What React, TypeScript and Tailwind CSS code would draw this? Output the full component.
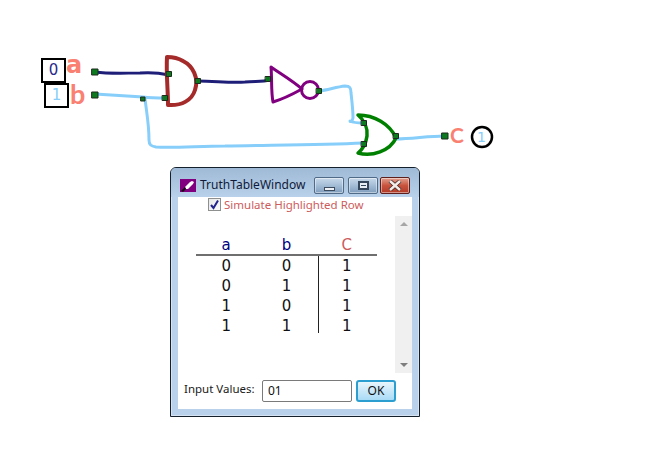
const rows = [
  ["0", "0", "1"],
  ["0", "1", "1"],
  ["1", "0", "1"],
  ["1", "1", "1"],
];

const terminals = [
  [95, 72, 6],
  [95, 95, 6],
  [143, 99, 4],
  [169, 74, 5],
  [165, 98, 5],
  [198, 81, 5],
  [268, 79, 5],
  [319, 91, 5],
  [364, 123, 5],
  [364, 144, 5],
  [396, 136, 5],
  [445, 136, 6],
];

function Circuit() {
  return (
    <svg className="absolute inset-0" width="664" height="459" fill="none" strokeLinecap="round" strokeLinejoin="round">
      <g stroke="#1e1e78" strokeWidth="3">
        <path d="M95 72C110 74 125 73 140 73C152 72 160 73 169 75" />
        <path d="M198 81C215 81 230 83 245 82C255 81 262 82 270 80" />
      </g>
      <g stroke="#87cefa" strokeWidth="3">
        <path d="M95 94C112 95 128 96 143 97C150 98 158 98 167 98" />
        <path d="M145 99C147 115 149 125 149 140C149 145 151 146 156 147C175 148 200 146 225 146C270 145 320 145 363 143" />
        <path d="M319 91C328 90 336 87 345 86C350 86 351 88 351 93C352 102 353 110 353 118C352 122 350 122 350 121C354 123 358 123 363 123" />
        <path d="M396 139C412 139 428 136 445 136" />
      </g>
      <path d="M167 57C166 72 168 90 168 105C182 106 192 100 195 90C199 78 193 66 183 61C178 58 172 57 167 57Z" stroke="#a52a2a" strokeWidth="4" />
      <g stroke="#800080" strokeWidth="3">
        <path d="M271 67C272 78 271 92 273 102C283 99 293 94 302 89C293 81 281 74 271 67Z" />
        <circle cx="310" cy="90" r="8.5" />
      </g>
      <g stroke="#008000" strokeWidth="3.5">
        <path d="M358 115C364 120 368 128 367 136C366 143 363 149 358 153C372 157 390 151 396 138C390 124 374 115 358 115Z" />
      </g>
      {terminals.map(([x, y, s], i) => (
        <rect key={i} x={x - s / 2} y={y - s / 2} width={s} height={s} fill="#0d7a1f" stroke="#1c2a1c" strokeWidth="1" />
      ))}
      <circle cx="482" cy="137" r="10" stroke="#000" strokeWidth="2.5" fill="#fff" />
    </svg>
  );
}

function TitleButton({ className, children }: { className: string; children: React.ReactNode }) {
  return (
    <div className={`w-[30px] h-[17px] flex items-center justify-center rounded-[2px] border shadow-[inset_0_0_0_1px_rgba(255,255,255,0.45)] ${className}`}>
      {children}
    </div>
  );
}

function TruthTableWindow() {
  return (
    <div className="absolute left-[170px] top-[167px] w-[250px] h-[250px] flex flex-col rounded-t-[6px] border border-[#14202c] bg-[#b9d1ea] shadow-[inset_0_0_0_1px_rgba(255,255,255,0.4)]">
      <div className="h-[29px] shrink-0 flex items-start pl-[9px] rounded-t-[5px] bg-gradient-to-b from-[#9fbad6] to-[#b9d1ea]">
        <svg className="mt-[11px]" width="16" height="13" viewBox="0 0 16 13">
          <rect width="16" height="13" fill="#800080" />
          <path d="M5 8L10 3L12 2L14 3L13 5L8 10L6 10Z" fill="#fff" />
          <path d="M1 12L5 8L6 10L3 13Z" fill="#111" />
        </svg>
        <span className="ml-[4px] mt-[9px] text-[12px] leading-[16px] text-[#101a3a] font-['Noto_Sans',sans-serif]">TruthTableWindow</span>
        <div className="ml-auto flex mt-[9px] mr-[9px]">
          <TitleButton className="mr-[4px] border-[#4f6b88] bg-gradient-to-b from-[#c8d9ea] via-[#a4bdd6] to-[#7f9dbd]">
            <div className="w-[11px] h-[4px] mt-[6px] bg-[#eef2f7] border border-[#3d4c5e]" />
          </TitleButton>
          <TitleButton className="mr-[2px] border-[#4f6b88] bg-gradient-to-b from-[#c8d9ea] via-[#a4bdd6] to-[#7f9dbd]">
            <div className="w-[11px] h-[9px] border-2 border-[#33465c] bg-[#e8eef5] flex items-center justify-center">
              <div className="w-[5px] h-[1px] bg-[#33465c]" />
            </div>
          </TitleButton>
          <TitleButton className="border-[#5e1f1c] bg-gradient-to-b from-[#e0a090] via-[#c9543e] to-[#b03a26]">
            <svg width="14" height="11" viewBox="0 0 14 11">
              <path d="M2 1L12 10M12 1L2 10" stroke="#3f2a2a" strokeWidth="4" />
              <path d="M2 1L12 10M12 1L2 10" stroke="#f3ece8" strokeWidth="2.4" />
            </svg>
          </TitleButton>
        </div>
      </div>
      <div className="mx-[7px] mb-[7px] flex-1 flex flex-col bg-white">
        <div className="h-[19px] shrink-0 flex items-start pt-[1px] pl-[30px]">
          <div className="w-[13px] h-[13px] flex items-center justify-center border border-[#8e8f8f] bg-gradient-to-br from-[#e8e8e8] to-[#fafafa]">
            <svg width="11" height="11" viewBox="0 0 11 11" fill="none">
              <path d="M2 6L4.5 9L9 1.5" stroke="#23238e" strokeWidth="2" />
            </svg>
          </div>
          <span className="ml-[3px] text-[11.5px] leading-[13px] text-[#cd5c5c] font-['Noto_Sans',sans-serif]">Simulate Highlighted Row</span>
        </div>
        <div className="flex-1 flex">
          <div className="flex-1 pl-[18px] pt-[20px]">
            <div className="w-[181px] font-['DejaVu_Sans',sans-serif] text-[15px] leading-[20px]">
              <div className="grid grid-cols-3 h-[20px] border-b-2 border-[#6f6f6f] text-center">
                <span className="text-[#000080] leading-[18px]">a</span>
                <span className="text-[#000080] leading-[18px]">b</span>
                <span className="text-[#cd5c5c] leading-[18px]">C</span>
              </div>
              <div className="relative">
                {rows.map((row, i) => (
                  <div key={i} className="grid grid-cols-3 h-[20px] text-center text-[#111111]">
                    {row.map((v, j) => (
                      <span key={j}>{v}</span>
                    ))}
                  </div>
                ))}
                <div className="absolute left-[122px] top-0 w-[1px] h-[77px] bg-[#222222]" />
              </div>
            </div>
          </div>
          <div className="w-[17px] shrink-0 mb-[1px] bg-[#f0f0f0] flex flex-col items-center justify-between py-[6px]">
            <div className="w-0 h-0 border-x-[4px] border-x-transparent border-b-[4px] border-b-[#a6a6a6]" />
            <div className="w-0 h-0 border-x-[4px] border-x-transparent border-t-[4px] border-t-[#7e7e7e]" />
          </div>
        </div>
        <div className="h-[35px] shrink-0 flex items-start pl-[6px] font-['Noto_Sans',sans-serif]">
          <span className="w-[78px] shrink-0 text-[11.5px] leading-[14px] mt-[8px] text-[#1a1a1a]">Input Values:</span>
          <div className="mt-[6px] w-[90px] h-[22px] pl-[5px] flex items-center border border-[#7a7a7a] rounded-[2px] text-[12px] text-[#111111]">01</div>
          <div className="ml-[4px] mt-[6px] w-[40px] h-[22px] flex items-center justify-center rounded-[3px] border-2 border-[#2c9fd0] bg-gradient-to-b from-[#e8f5fc] to-[#a9dbf6] text-[12px] text-[#111111]">OK</div>
        </div>
      </div>
    </div>
  );
}

export default function App() {
  return (
    <div className="relative w-[664px] h-[459px] bg-white overflow-hidden">
      <Circuit />
      <div className="absolute left-[41px] top-[58px] w-[25px] h-[25px] flex items-center justify-center border-2 border-black bg-white text-[15px] text-[#2a2a8a] font-['DejaVu_Sans',sans-serif]">0</div>
      <div className="absolute left-[44px] top-[83px] w-[25px] h-[25px] flex items-center justify-center border-2 border-black bg-white text-[15px] text-[#87cefa] font-['DejaVu_Sans',sans-serif]">1</div>
      <span className="absolute left-[66px] top-[54px] text-[24px] leading-[22px] font-bold text-[#fa8072] font-['DejaVu_Sans',sans-serif]">a</span>
      <span className="absolute left-[70px] top-[82px] text-[27px] leading-[24px] font-bold text-[#fa8072] font-['Lato',sans-serif]">b</span>
      <span className="absolute left-[450px] top-[124px] text-[21px] leading-[22px] font-bold text-[#fa8072] font-['Lato',sans-serif]">C</span>
      <span className="absolute left-[477px] top-[129px] text-[14px] leading-[16px] text-[#87cefa] font-['DejaVu_Sans',sans-serif]">1</span>
      <TruthTableWindow />
    </div>
  );
}
